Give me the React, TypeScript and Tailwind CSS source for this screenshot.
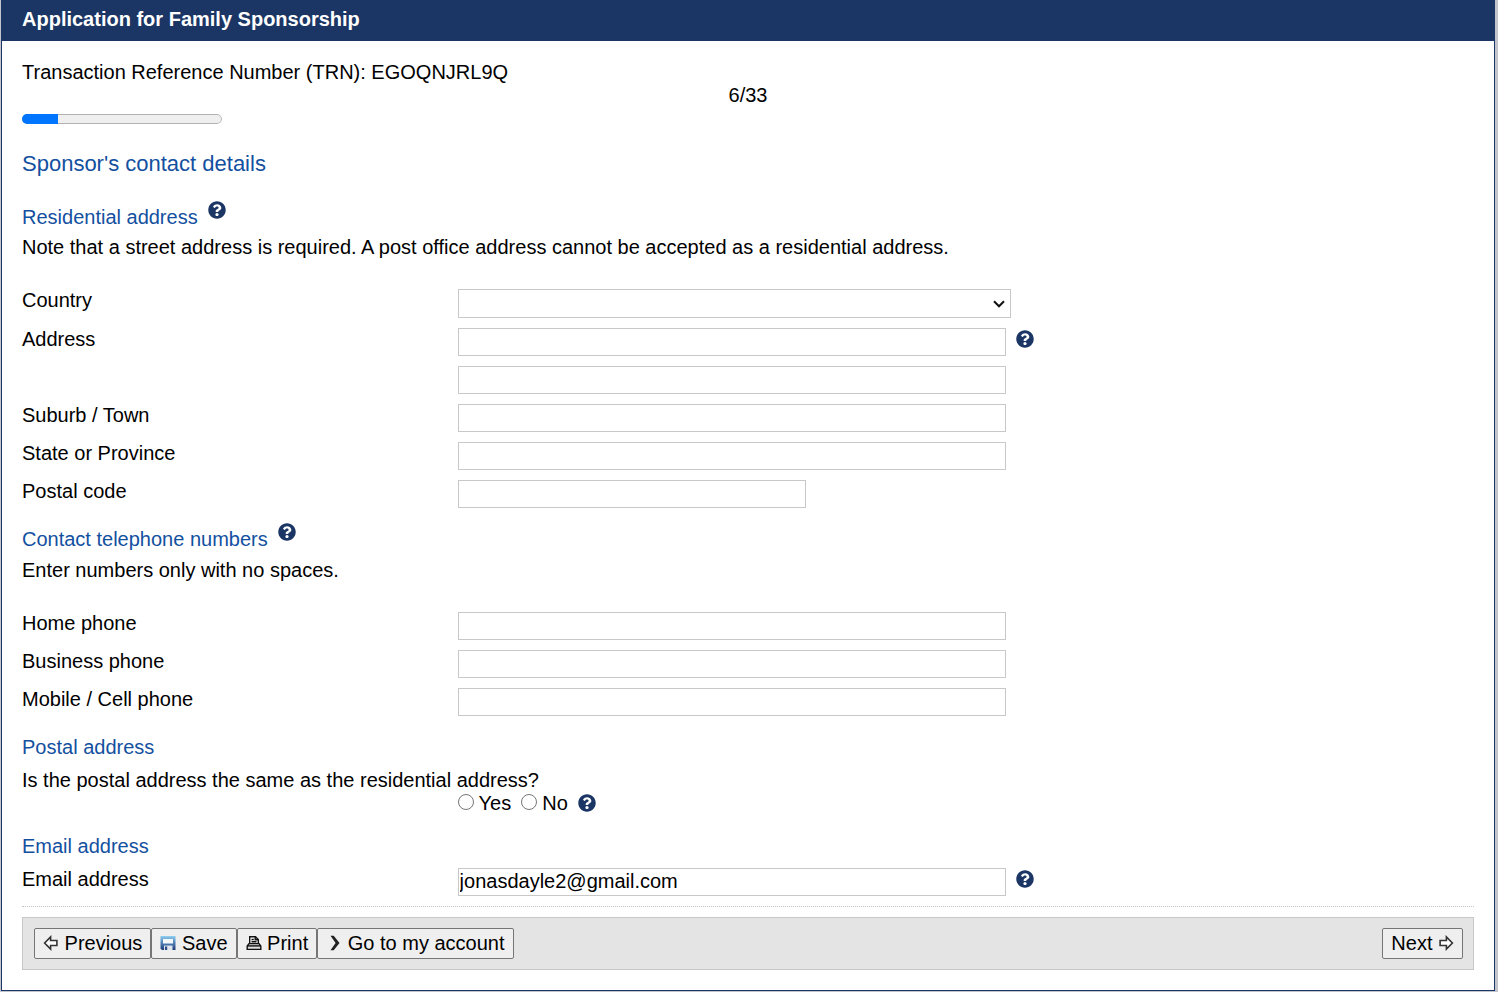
import { useState } from 'react'
import type { ButtonHTMLAttributes, ReactNode } from 'react'
import { FaQuestionCircle } from 'react-icons/fa'

interface TextField {
  id: string
  label: string
  size?: 'long' | 'short'
  help?: boolean
}

const ADDRESS_FIELDS: TextField[] = [
  { id: 'address-1', label: 'Address', help: true },
  { id: 'address-2', label: '' },
  { id: 'suburb', label: 'Suburb / Town' },
  { id: 'state', label: 'State or Province' },
  { id: 'postcode', label: 'Postal code', size: 'short' },
]

const PHONE_FIELDS: TextField[] = [
  { id: 'home-phone', label: 'Home phone' },
  { id: 'business-phone', label: 'Business phone' },
  { id: 'mobile-phone', label: 'Mobile / Cell phone' },
]

function HelpButton({ label }: { label: string }) {
  return (
    <button type="button" aria-label={label} className="shrink-0 text-[#1b3564]">
      <FaQuestionCircle className="size-[18px]" />
    </button>
  )
}

function SectionHeading({
  children,
  help,
}: {
  children: ReactNode
  help?: string
}) {
  return (
    <div className="flex h-6 items-start gap-[10px]">
      <h3 className="leading-6 text-[#1350a0]">{children}</h3>
      {help && (
        <span className="-mt-1 flex">
          <HelpButton label={help} />
        </span>
      )}
    </div>
  )
}

function FieldRow({
  id,
  label,
  children,
}: {
  id: string
  label: string
  children: ReactNode
}) {
  return (
    <div className="flex items-start">
      <div className="w-[30%] shrink-0">
        {label && <label htmlFor={id}>{label}</label>}
      </div>
      <div className="flex min-w-0 flex-1 items-start gap-[10px]">
        {children}
      </div>
    </div>
  )
}

function TextRow({
  field,
  defaultValue,
}: {
  field: TextField
  defaultValue?: string
}) {
  return (
    <FieldRow id={field.id} label={field.label}>
      <input
        id={field.id}
        type="text"
        defaultValue={defaultValue}
        aria-label={field.label ? undefined : 'Address line 2'}
        className={
          field.size === 'short'
            ? 'h-7 w-full max-w-[348px] border border-[#c8c8c8] bg-white px-px pb-0.5'
            : 'h-7 w-full max-w-[548px] border border-[#c8c8c8] bg-white px-px pb-0.5'
        }
      />
      {field.help && (
        <span className="mt-0.5 flex">
          <HelpButton label={`Help: ${field.label}`} />
        </span>
      )}
    </FieldRow>
  )
}

function ToolbarButton({
  children,
  ...props
}: ButtonHTMLAttributes<HTMLButtonElement>) {
  return (
    <button
      type="button"
      className="h-[31px] rounded-xs border border-[#767676] bg-[#efefef] px-2 whitespace-nowrap"
      {...props}
    >
      {children}
    </button>
  )
}

function ArrowIcon({ flip }: { flip?: boolean }) {
  return (
    <svg
      viewBox="0 0 16 16"
      className={
        flip
          ? 'inline-block size-4 -scale-x-100 align-[-1px]'
          : 'inline-block size-4 align-[-1px]'
      }
      fill="#fff"
      stroke="#333"
      strokeWidth="1.6"
      aria-hidden="true"
    >
      <path d="M1.6 8 7.6 1.9v3.6h6.3v5H7.6v3.6z" />
    </svg>
  )
}

function SaveIcon() {
  return (
    <svg
      viewBox="0 0 16 16"
      className="inline-block size-4 align-[-1px]"
      aria-hidden="true"
    >
      <defs>
        <linearGradient id="disk" x1="0" y1="0" x2="0" y2="1">
          <stop offset="0" stopColor="#8fd0f0" />
          <stop offset="0.35" stopColor="#5f93c8" />
          <stop offset="1" stopColor="#1f3c78" />
        </linearGradient>
      </defs>
      <path d="M.5 1h15v14H2L.5 13.5z" fill="url(#disk)" />
      <path d="M3 4h10v4.5H3z" fill="#f4f8fc" />
      <path d="M4 10.5h8.5V15H4z" fill="#dfe4ec" />
      <path d="M5 11.5h2.2V15H5z" fill="#2c4c88" />
    </svg>
  )
}

function PrintIcon() {
  return (
    <svg
      viewBox="0 0 16 16"
      className="inline-block size-4 align-[-1px]"
      fill="#fff"
      stroke="#111"
      strokeWidth="1.4"
      aria-hidden="true"
    >
      <path d="M3.7 9V1.7h5.8l2.8 2.8V9" />
      <path d="M9.2 1.8v3h3M5.5 4.5h2.3M5.5 6.8h5" fill="none" />
      <path d="M1.2 14.4V11l1.8-2.4h10l1.8 2.4v3.4z" fill="#ddd" />
      <path d="M1.2 10.9h13.6" />
    </svg>
  )
}

function ChevronIcon() {
  return (
    <svg
      viewBox="0 0 16 16"
      className="inline-block size-4 align-[-1px]"
      fill="#222"
      aria-hidden="true"
    >
      <path d="M4.5.8h3.2L13.5 8l-5.8 7.2H4.5L9.6 8z" />
    </svg>
  )
}

export default function App() {
  const [sameAddress, setSameAddress] = useState('')

  return (
    <div className="min-h-screen border-r-[3px] border-b border-l border-[#c4c4cc] bg-white font-['Liberation_Sans',Arial,sans-serif] text-[20px] leading-[23px] text-black">
      <main className="border-x border-b border-[#1b3564]">
        <header className="bg-[#1b3564] px-5 pt-2 pb-[10px]">
          <h1 className="font-bold text-white">
            Application for Family Sponsorship
          </h1>
        </header>

        <form className="px-5 pt-5 pb-5" onSubmit={(e) => e.preventDefault()}>
          <p>Transaction Reference Number (TRN): EGOQNJRL9Q</p>
          <p className="text-center">6/33</p>
          <progress
            value={6}
            max={33}
            aria-label="Application progress"
            className="mt-[7px] block h-[10px] w-[200px] appearance-none overflow-hidden rounded-full [&::-webkit-progress-bar]:rounded-full [&::-webkit-progress-bar]:bg-[#efefef] [&::-webkit-progress-bar]:shadow-[inset_0_0_0_1px_#b2b2b2] [&::-webkit-progress-value]:bg-[#0075ff]"
          />

          <h2 className="mt-[26px] text-[22px] leading-7 text-[#1350a0]">
            Sponsor's contact details
          </h2>

          <section className="mt-[27px]">
            <SectionHeading help="Help: Residential address">
              Residential address
            </SectionHeading>
            <p className="mt-[7px]">
              Note that a street address is required. A post office address
              cannot be accepted as a residential address.
            </p>
            <div className="mt-[30px] flex flex-col gap-[10px]">
              <FieldRow id="country" label="Country">
                <div className="grid w-full max-w-[553px] items-center">
                  <select
                    id="country"
                    className="col-start-1 row-start-1 h-[29px] w-full appearance-none border border-[#c8c8c8] bg-white"
                  >
                    <option value="" />
                  </select>
                  <svg
                    viewBox="0 0 12 8"
                    className="pointer-events-none col-start-1 row-start-1 mr-1.5 h-2 w-3 justify-self-end"
                    fill="none"
                    stroke="#111"
                    strokeWidth="2"
                    aria-hidden="true"
                  >
                    <path d="m1 1.3 5 5 5-5" />
                  </svg>
                </div>
              </FieldRow>
              {ADDRESS_FIELDS.map((field) => (
                <TextRow key={field.id} field={field} />
              ))}
            </div>
          </section>

          <section className="mt-[19px]">
            <SectionHeading help="Help: Contact telephone numbers">
              Contact telephone numbers
            </SectionHeading>
            <p className="mt-2">Enter numbers only with no spaces.</p>
            <div className="mt-[30px] flex flex-col gap-[10px]">
              {PHONE_FIELDS.map((field) => (
                <TextRow key={field.id} field={field} />
              ))}
            </div>
          </section>

          <section className="mt-[19px]">
            <SectionHeading>Postal address</SectionHeading>
            <fieldset className="mt-[10px]">
              <legend>
                Is the postal address the same as the residential address?
              </legend>
              <div className="flex items-start gap-[10px] pl-[30%]">
                {['Yes', 'No'].map((option) => (
                  <label key={option} className="flex items-start gap-[5px]">
                    <input
                      type="radio"
                      name="same-address"
                      value={option}
                      checked={sameAddress === option}
                      onChange={() => setSameAddress(option)}
                      className="mt-0.5 size-4"
                    />
                    {option}
                  </label>
                ))}
                <span className="mt-0.5 flex">
                  <HelpButton label="Help: Postal address" />
                </span>
              </div>
            </fieldset>
          </section>

          <section className="mt-[19px]">
            <SectionHeading>Email address</SectionHeading>
            <div className="mt-[10px]">
              <TextRow
                field={{ id: 'email', label: 'Email address', help: true }}
                defaultValue="jonasdayle2@gmail.com"
              />
            </div>
          </section>

          <hr className="my-[10px] border-t border-dotted border-[#c4c4c4]" />

          <div className="flex justify-between border border-[#c8c8c8] bg-[#e4e4e4] py-[10px] pr-[10px] pl-[11px]">
            <div className="flex">
              <ToolbarButton>
                <ArrowIcon /> Previous
              </ToolbarButton>
              <ToolbarButton>
                <SaveIcon /> Save
              </ToolbarButton>
              <ToolbarButton>
                <PrintIcon /> Print
              </ToolbarButton>
              <ToolbarButton>
                <ChevronIcon /> Go to my account
              </ToolbarButton>
            </div>
            <ToolbarButton>
              Next <ArrowIcon flip />
            </ToolbarButton>
          </div>
        </form>
      </main>
    </div>
  )
}
